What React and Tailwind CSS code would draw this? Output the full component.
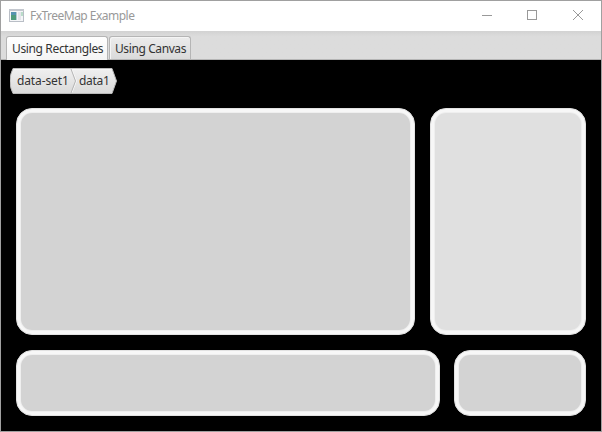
import React from 'react';

function TitleBar() {
  return (
    <header className="flex h-[30px] shrink-0 items-center bg-white text-[#999999]">
      <svg className="ml-2 shrink-0" width="16" height="14" viewBox="0 0 16 14" shapeRendering="crispEdges">
        <rect x="0.5" y="0.5" width="14" height="12" fill="#f5f6f8" stroke="#b9bec6" />
        <rect x="0" y="0" width="15" height="2" fill="#c3c7ce" />
        <rect x="2" y="3" width="5" height="8" fill="#5593b0" />
        <rect x="2" y="6" width="5" height="5" fill="#4e9b7c" />
        <rect x="7" y="3" width="1" height="8" fill="#b4cbd1" />
        <rect x="9" y="3" width="3" height="8" fill="#e3e5ea" />
        <rect x="12" y="3" width="2" height="4" fill="#b9dcc9" />
      </svg>
      <h1 className="ml-[5px] whitespace-nowrap text-[12px] leading-4 tracking-[-0.52px]">FxTreeMap Example</h1>
      <div className="ml-auto flex items-center">
        <svg width="119" height="30" viewBox="0 0 119 30" fill="none" stroke="#999999">
          <path d="M0 14.5H10" />
          <rect x="45.5" y="9.5" width="9" height="9" />
          <path d="M91 9L101 19M101 9L91 19" />
        </svg>
      </div>
    </header>
  );
}

function Tabs() {
  return (
    <nav className="flex h-[29px] shrink-0 items-end border-b border-[#b5b5b5] bg-gradient-to-b from-[#d2d2d2] via-[#dcdcdc] via-20% to-[#dcdcdc] pl-[5px] text-[12px] text-[#333333]">
      <div className="-mb-px flex h-6 w-[102px] items-center rounded-t-[3px] border border-b-0 border-[#b5b5b5] bg-gradient-to-b from-white to-[#f4f4f4] pl-[5px]">
        <span className="whitespace-nowrap tracking-[-0.36px]">Using Rectangles</span>
      </div>
      <div className="ml-px flex h-[23px] w-[82px] items-center rounded-t-[3px] border border-b-0 border-[#b5b5b5] bg-gradient-to-b from-[#ececec] to-[#dadada] pl-[5px] pt-px shadow-[inset_1px_1px_0_#f5f5f5]">
        <span className="whitespace-nowrap tracking-[-0.4px]">Using Canvas</span>
      </div>
    </nav>
  );
}

function Breadcrumbs() {
  return (
    <div className="relative ml-[9px] h-[26px] w-[108px] text-[12px] text-[#333333]">
      <svg className="absolute inset-0" width="108" height="26" viewBox="0 0 108 26">
        <defs>
          <linearGradient id="crumb" x1="0" y1="0" x2="0" y2="1">
            <stop offset="0" stopColor="#f0f0f0" />
            <stop offset="1" stopColor="#dadada" />
          </linearGradient>
        </defs>
        <path d="M3 .5H102L106.5 13L102 25.5H3Q0 20 0 13Q0 6 3 .5Z" fill="url(#crumb)" stroke="#b9b9b9" />
        <path d="M4 1.5H101M62 1.5L66.5 13L62 24.5" fill="none" stroke="#f8f8f8" />
        <path d="M61 1L65.5 13L61 25" fill="none" stroke="#b5b5b5" />
      </svg>
      <div className="relative flex h-[26px] items-center pl-[7px]">
        <span className="w-[62px] whitespace-nowrap tracking-[-0.12px]">data-set1</span>
        <span className="whitespace-nowrap tracking-[-0.3px]">data1</span>
      </div>
    </div>
  );
}

function TreeMap() {
  const tile = 'rounded-[16px] border border-[#e2e2e2] shadow-[inset_0_0_0_3px_#f7f7f7,inset_0_0_0_4px_#efefef]';
  return (
    <div className="ml-[15px] mt-[14px] flex w-[570px] flex-col gap-[15px]">
      <div className="flex h-[227px] justify-between">
        <div className={`${tile} w-[399px] bg-[#d3d3d3]`} />
        <div className={`${tile} w-[156px] bg-[#e0e0e0]`} />
      </div>
      <div className="flex h-[66px] justify-between">
        <div className={`${tile} w-[424px] bg-[#d3d3d3]`} />
        <div className={`${tile} w-[132px] bg-[#d3d3d3]`} />
      </div>
    </div>
  );
}

export default function App() {
  return (
    <div className="flex h-[432px] w-[602px] flex-col overflow-hidden border border-[#a0a0a0] bg-black font-['Noto_Sans','Open_Sans',sans-serif]">
      <TitleBar />
      <Tabs />
      <main className="flex-1 bg-black pt-2">
        <Breadcrumbs />
        <TreeMap />
      </main>
    </div>
  );
}
